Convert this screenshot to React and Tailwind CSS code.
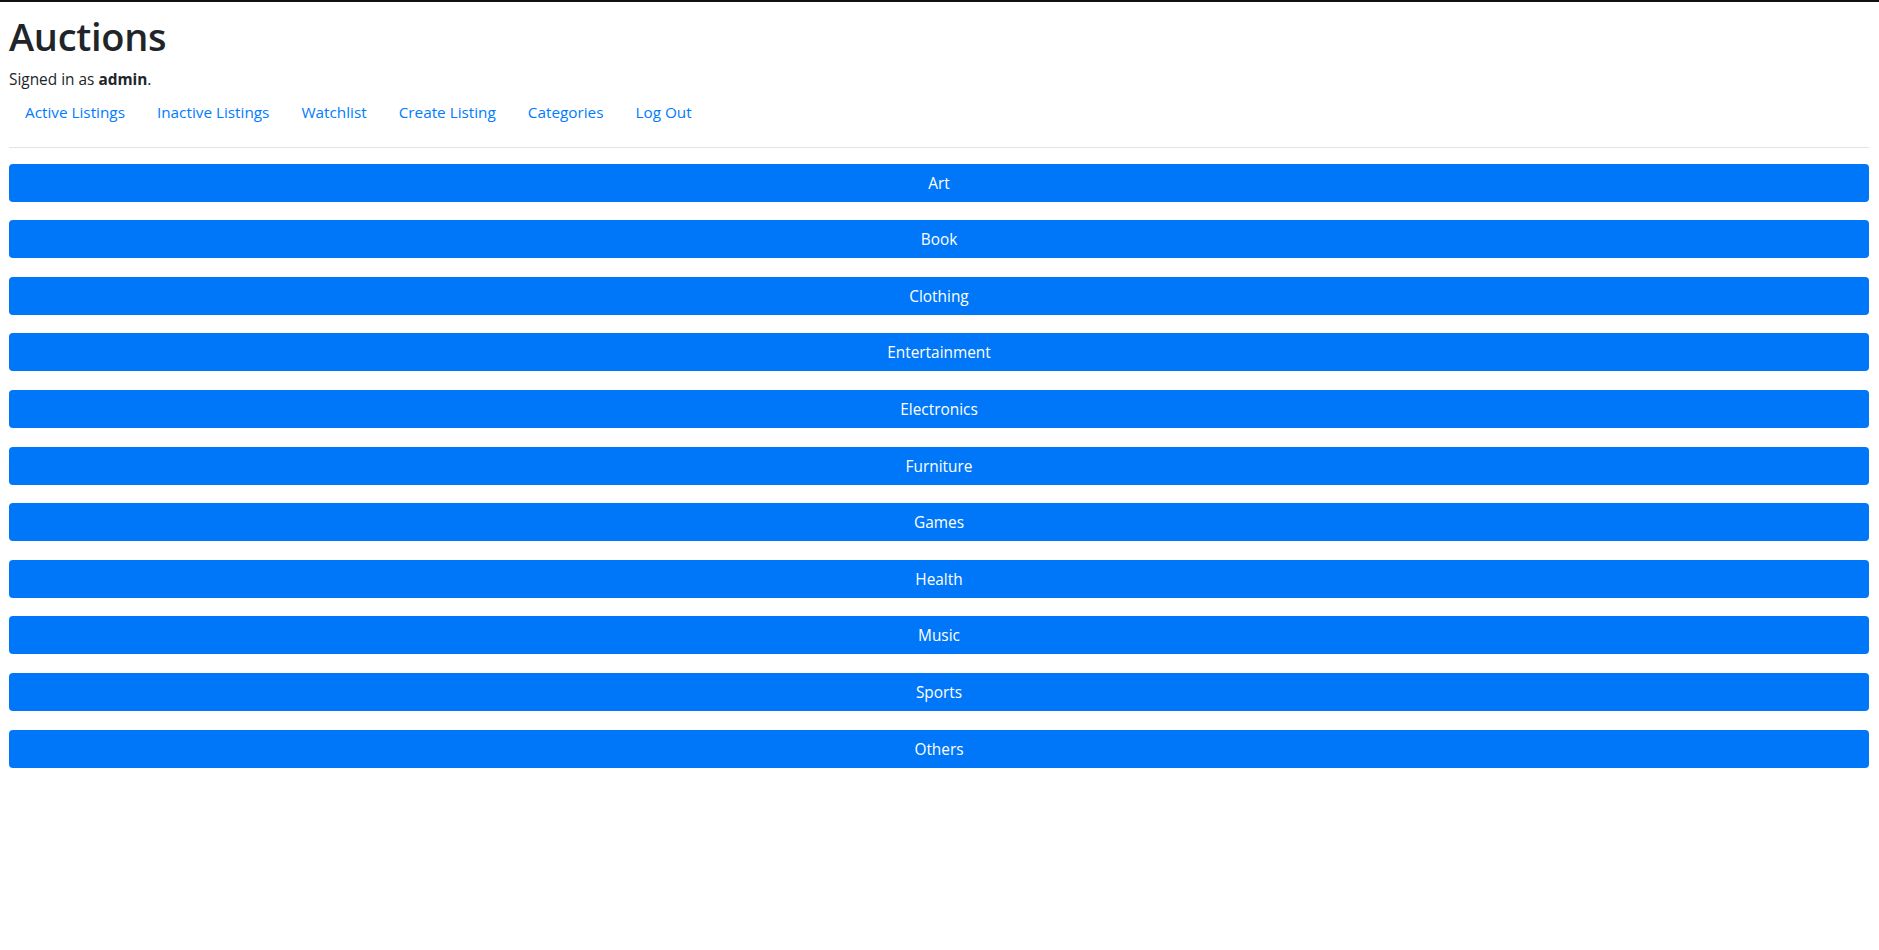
import React from "react";

const categories = [
  "Art",
  "Book",
  "Clothing",
  "Entertainment",
  "Electronics",
  "Furniture",
  "Games",
  "Health",
  "Music",
  "Sports",
  "Others",
];

const links = [
  "Active Listings",
  "Inactive Listings",
  "Watchlist",
  "Create Listing",
  "Categories",
  "Log Out",
];

export default function App() {
  return (
    <div
      className="min-h-[950px] bg-white border-t-2 border-[#111] pl-[9px] pr-[10px] text-[#212529]"
      style={{ fontFamily: '"Open Sans", "Noto Sans", sans-serif' }}
    >
      <h1 className="mt-[10px] text-[38px] leading-[48px] font-semibold tracking-[-0.3px]">Auctions</h1>
      <div className="mt-[7.6px] text-[15.4px] leading-[24px]">
        Signed in as <strong className="font-bold">admin</strong>.
      </div>
      <ul className="flex">
        {links.map((l) => (
          <li key={l}>
            <a href="#" className="block px-4 py-2 text-[15.3px] leading-[24px] text-[#007bff]">
              {l}
            </a>
          </li>
        ))}
      </ul>
      <hr className="mt-[15px] border-0 border-t border-[#e3e3e3]" />
      <div className="mt-4 flex flex-col gap-[18.6px]">
        {categories.map((c) => (
          <a
            key={c}
            href="#"
            className="block h-[38px] rounded-[4px] bg-[#0077f8] pt-px text-center text-[15.4px] leading-[37px] text-white"
          >
            {c}
          </a>
        ))}
      </div>
    </div>
  );
}
